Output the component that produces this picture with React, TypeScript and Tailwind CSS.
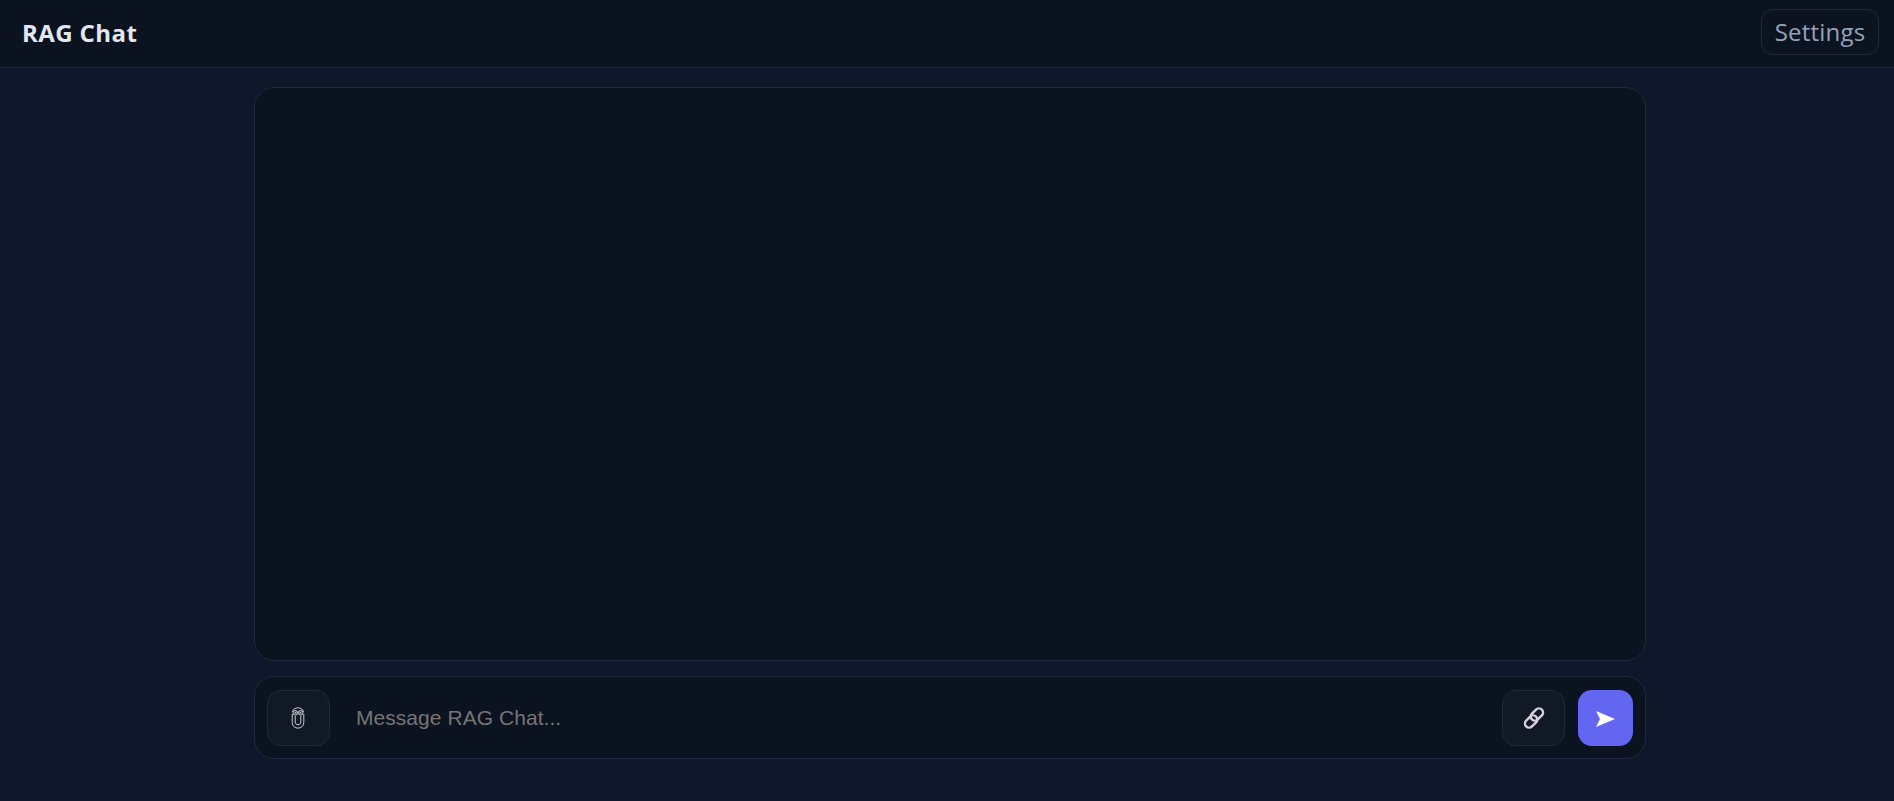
const ClipIcon = () => (
  <svg width="14" height="22" viewBox="0 0 14 22" fill="none" stroke="#c9c9cf" strokeWidth="1" className="-ml-[2px]">
    <path d="M1.2 7 V15.5 C1.2 23 12.8 23 12.8 15.5 V7" />
    <path d="M4.2 9 V15 C4.2 18.6 9.8 18.6 9.8 15 V9" />
    <path d="M1.6 5 C1.6 -0.6 12.4 -0.6 12.4 5" />
    <circle cx="4.3" cy="5.8" r="2.3" fill="#4a4348" />
    <circle cx="9.7" cy="5.8" r="2.3" fill="#4a4348" />
    <circle cx="4.6" cy="5.8" r="0.8" fill="#d8d8dc" stroke="none" />
    <circle cx="9.4" cy="5.8" r="0.8" fill="#d8d8dc" stroke="none" />
  </svg>
);

const LinkIcon = () => (
  <svg width="22" height="22" viewBox="0 0 22 22" fill="none" stroke="#d8d0dc" strokeWidth="2.4">
    <rect x="6.9" y="3.4" width="14" height="8.2" rx="4.1" transform="rotate(-45 13.9 7.5)" />
    <rect x="1.1" y="10.4" width="14" height="8.2" rx="4.1" transform="rotate(-45 8.1 14.5)" />
  </svg>
);

export default function App() {
  return (
    <div className="h-[801px] flex flex-col bg-[#0f172a] overflow-hidden" style={{ fontFamily: '"Liberation Sans", sans-serif' }}>
      <header className="h-[68px] flex items-center justify-between pl-[22px] pr-[15px] bg-[#0c1320] border-b border-[#1e293b]">
        <h1 className="text-[24px] font-bold text-[#e2e8f0] font-['Open_Sans',sans-serif] tracking-[0.4px] -mt-px">RAG Chat</h1>
        <button className="h-[46px] w-[118px] -mt-[4px] rounded-xl border border-[#1e293b] text-[24px] text-[#94a3b8] font-['Open_Sans',sans-serif] tracking-[0.2px]">
          Settings
        </button>
      </header>

      <main className="flex flex-col flex-1 pl-[254px] pr-[248px] pt-[19px] pb-[42px] gap-[15px]">
        <div className="flex-1 rounded-[20px] border border-[#1e293b] bg-[#0c1320]" />

        <div className="h-[83px] flex items-center gap-[13px] px-[12px] rounded-[20px] border border-[#1e293b] bg-[#0c1320]">
          <button className="w-[63px] h-[56px] flex items-center justify-center rounded-[14px] border border-[#1e293b] bg-[#111927]">
            <ClipIcon />
          </button>
          <input
            placeholder="Message RAG Chat..."
            className="flex-1 h-[56px] bg-transparent px-[13px] pt-px text-[21px] tracking-[0.05px] text-[#e2e8f0] placeholder:text-[#757575] outline-none"
          />
          <button className="w-[63px] h-[56px] flex items-center justify-center rounded-[14px] border border-[#1e293b] bg-[#111927]">
            <LinkIcon />
          </button>
          <button className="w-[55px] h-[56px] flex items-center justify-center rounded-[14px] bg-[#6366f1] text-white">
            <svg width="19" height="16" viewBox="0 0 19 16" fill="#ffffff" className="mt-[3px]">
              <path d="M0 0 L19 8 L0 16 L4 8 Z" />
            </svg>
          </button>
        </div>
      </main>
    </div>
  );
}
